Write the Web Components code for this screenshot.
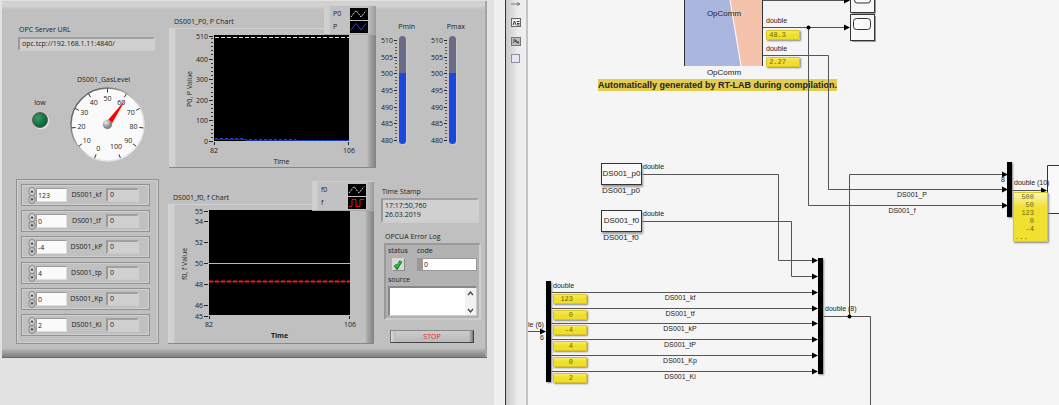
<!DOCTYPE html>
<html lang="en">
<head>
<meta charset="utf-8">
<title>OPC UA monitor and RT-LAB model</title>
<style>
  body { margin: 0; background: #e2e2e2; font-family: "Open Sans", "Noto Sans", sans-serif; font-size: 7px; line-height: 10px; color: #1c1c1c; }
</style>
</head>
<body>
<main-workspace></main-workspace>

<script>
const define = (name, html, setup) => {
  customElements.define(name, class extends HTMLElement {
    connectedCallback() {
      if (this.shadowRoot) return;
      const root = this.attachShadow({ mode: "open" });
      const t = document.createElement("template");
      t.innerHTML = typeof html === "function" ? html(this) : html;
      root.append(t.content.cloneNode(true));
      if (setup) setup(this, root);
    }
  });
};

/* Sunken text indicator */
define("lv-field", `
<style>
  :host { display: block; box-sizing: border-box; background: #d0d0d0; border: 2px solid; border-color: #a0a0a0 #d0d0d0 #cdcdcd #999; padding: 0 2px; }
  output { display: block; white-space: pre-line; }
</style><output><slot></slot></output>`);

/* Numeric control with its read-back value */
define("param-row", el => `
<style>
  :host { display: flex; align-items: center; box-sizing: border-box; height: 22px; padding: 0 10px 0 6px; border: 1px solid #929292; outline: 1px solid #d0d0d0; outline-offset: -2px; }
  svg { flex: none; width: 8px; height: 17px; }
  input { box-sizing: border-box; width: 31px; height: 14px; margin: 0; padding: 0 1px; border: 1px solid; border-color: #999 #ddd #ddd #999; border-radius: 0; background: #fafafa; font: inherit; color: inherit; }
  label { flex: 1; text-align: center; }
  lv-field { width: 33px; height: 14px; }
</style>
<svg viewBox="0 0 8 17" aria-hidden="true"><rect x="1" y="0.5" width="6" height="8" rx="3" fill="#d5d5d5" stroke="#858585"/><rect x="1" y="8.5" width="6" height="8" rx="3" fill="#c5c5c5" stroke="#858585"/><path d="M2.5 5.5L4 3l1.5 2.500zM2.500 11.500h3L4 14z" fill="#333"/></svg>
<input id="v" value="${el.getAttribute("value")}">
<label for="v">${el.getAttribute("label")}</label>
<lv-field>0</lv-field>`);

/* Round gas level dial */
define("gas-gauge", () => {
  let s = "";
  for (let v = 0; v <= 100; v += 10) {
    const ang = (111 + v * 3.18) * Math.PI / 180;
    const c = Math.cos(ang), n = Math.sin(ang);
    s += `<path d="M${37.5 + c * 32} ${37.5 + n * 32}L${37.5 + c * 36} ${37.5 + n * 36}" stroke="#333"/>`;
    const r = v === 100 ? 24 : 26;
    s += `<text x="${37.5 + c * r}" y="${40 + n * r}">${v}</text>`;
  }
  return `
<style>
  :host { display: block; }
  svg { display: block; width: 76px; height: 76px; overflow: visible; }
  text { font-size: 7px; text-anchor: middle; fill: #1c1c1c; }
</style>
<svg viewBox="0 0 76 76" role="img" aria-label="Gas level">
  <defs><linearGradient id="r" x1="0" y1="0" x2="1" y2="1"><stop offset=".2" stop-color="#666"/><stop offset=".6" stop-color="#ddd"/><stop offset="1" stop-color="#eee"/></linearGradient>
  <radialGradient id="k" cx=".35" cy=".3"><stop offset="0" stop-color="#eee"/><stop offset="1" stop-color="#888"/></radialGradient></defs>
  <circle cx="37.500" cy="37.500" r="36.500" fill="#fafafa" stroke="url(#r)" stroke-width="1.500"/>
  ${s}
  <path d="M35.500 36L55.500 12.500L40.500 39z" fill="#f00"/>
  <circle cx="37.500" cy="37.500" r="4.700" fill="url(#k)"/>
</svg>`;
});

define("status-led", `
<style>
  :host { display: flex; flex-direction: column; align-items: center; gap: 4px; }
  span { width: 14px; height: 14px; border-radius: 50%; border: 1px solid #585858; background: radial-gradient(circle at 35% 35%, #3b9a62, #0c6e38 60%, #07522a); box-shadow: 1px 1px 1px #eee; }
</style><slot></slot><span></span>`);

/* Strip chart: frame, plot, axes and legend */
const charts = {
  p: {
    title: "DS001_P0, P Chart", ylabel: "P0, P Value", x: 45, y: 7, w: 135, h: 106, frame: 207, legend: 52,
    y0: 112, scale: 0.206, min: 0, ticks: [510, 400, 300, 200, 100, 0], minor: 20, names: ["P0", "P"],
    lines: `<path d="M46 8.500H180" stroke="#ddd" stroke-dasharray="4 2"/><path d="M46 110.500H77M77 111.500H180" stroke="#1633a0"/><path d="M46 109.500H75M75 110.500H127M127 111.500H180" stroke="#1c3fd0" stroke-dasharray="3 2"/>`,
    icon: `<path d="M1 9L6 2.500L11 9L16 2.500" stroke="#1f45e0" fill="none"/>`
  },
  f: {
    title: "DS001_f0, f Chart", ylabel: "f0, f Value", x: 41, y: 6, w: 141, h: 105, frame: 206, legend: 62, bold: true,
    y0: 110.500, scale: 10.45, min: 45, ticks: [55, 54, 52, 50, 48, 46, 45], names: ["f0", "f"],
    lines: `<path d="M41 58.500H182" stroke="#bbb"/><path d="M41 76.500H182" stroke="#b00"/><path d="M41 76.500H182" stroke="#f01818" stroke-width="2" stroke-dasharray="4 2"/>`,
    icon: `<path d="M1 9.500H4V2.500H8V9.500H12V2.500H16" stroke="#f01010" fill="none"/>`
  }
};
define("lv-chart", el => {
  const c = charts[el.getAttribute("kind")];
  const py = v => c.y0 - (v - c.min) * c.scale;
  let axis = c.ticks.map(v => `<text class="y" x="${c.x - 6}" y="${py(v) + 3}">${v}</text><path d="M${c.x - 5} ${Math.round(py(v)) + .5}h4" stroke="#222"/>`).join("");
  if (c.minor) for (let v = 0; v < 510; v += c.minor) axis += `<path d="M${c.x - 3} ${Math.round(py(v)) + .5}h2" stroke="#333"/>`;
  return `
<style>
  :host { display: block; position: relative; padding-top: 24px; width: ${c.frame}px; }
  h2 { position: absolute; left: 5px; top: 12px; margin: 0; font: inherit; }
  .frame { display: block; width: 100%; height: 138px; background: linear-gradient(90deg, #d3d3d3 0, #d0d0d0 6px, #c0c0c0 7px, #c0c0c0 calc(100% - 9px), #aaa calc(100% - 7px), #868686 calc(100% - 1px)); box-shadow: 0 -1px 0 #d2d2d2, 0 1px 0 #888; }
  .legend { position: absolute; top: 0; right: 0; display: grid; box-sizing: border-box; width: ${c.legend}px; height: 30px; grid-template-columns: 1fr 18px; align-items: center; padding: 1px 8px 1px 9px; background: linear-gradient(90deg, #d0d0d0 0, #d0d0d0 5px, #c2c2c2 6px, #c2c2c2 calc(100% - 8px), #999); border-bottom: 1px solid #aaa; border-top: 1px solid #cfcfcf; }
  .legend svg { width: 18px; height: 12px; background: #000; }
  text { font-size: 7px; text-anchor: middle; fill: #1c1c1c; } .y { text-anchor: end; }
  .b { ${c.bold ? "font-weight: 700" : ""} }
</style>
<h2>${c.title}</h2>
<svg class="frame" role="img" aria-label="${c.title}">
  <rect x="${c.x}" y="${c.y - 1}" width="${c.w}" height="${c.h}" fill="#000"/>
  ${c.lines}${axis}
  <path d="M${c.x + .5} ${c.y + c.h}v3M${c.x + c.w - .5} ${c.y + c.h}v3" stroke="#222"/>
  <text x="${c.x}" y="${c.y + c.h + 11}">82</text><text x="${c.x + c.w}" y="${c.y + c.h + 11}">106</text>
  <text class="b" x="${c.x + c.w / 2}" y="${c.y + c.h + 22}">Time</text>
  <text transform="translate(${c.x - 22} ${c.y + 53}) rotate(-90)">${c.ylabel}</text>
</svg>
<div class="legend">
  <span>${c.names[0]}</span><svg viewBox="0 0 18 12"><path d="M1 9L6 2.500L11 9L16 2.500" stroke="#ddd" fill="none" stroke-dasharray="2 1"/></svg>
  <span>${c.names[1]}</span><svg viewBox="0 0 18 12">${c.icon}</svg>
</div>`;
});

/* Vertical pressure slider, 480 to 510 */
define("pressure-slider", el => {
  let s = "";
  for (let i = 0; i <= 30; i++) {
    const y = Math.round(104 - i * 3.33) + .5, big = i % 5 === 0;
    s += `<path d="M${big ? 13 : 14} ${y}h${big ? 3 : 2}" stroke="${big ? "#222" : "#555"}"/>`;
    if (big) s += `<text x="12" y="${y + 2.5}">${480 + i}</text>`;
  }
  return `
<style>
  :host { display: grid; grid-template-columns: 18px 7px; justify-content: start; row-gap: 4px; }
  label { grid-column: 1 / 3; text-align: right; white-space: nowrap; margin-right: -9px; }
  svg { width: 18px; height: 108px; overflow: visible; }
  text { font-size: 7px; text-anchor: end; fill: #1c1c1c; }
  input { appearance: none; writing-mode: vertical-lr; direction: rtl; width: 7px; height: 108px; margin: 0; border-radius: 4px; background: linear-gradient(to top, #1c46e0 0, #1c46e0 66%, #6b6b88 66%); box-shadow: 1px 1px 0 #ccc; }
  input::-webkit-slider-thumb { appearance: none; width: 7px; height: 2px; background: transparent; }
</style>
<label for="r">${el.getAttribute("label")}</label>
<svg aria-hidden="true">${s}</svg>
<input id="r" type="range" min="480" max="510" value="500">`;
});

define("error-log", `
<style>
  :host { display: block; box-sizing: border-box; border: 2px solid; border-color: #999 #d0d0d0 #ccc #999; background: #b2b2b2; padding: 1px 2px 2px; }
  .top { display: grid; grid-template-columns: 29px minmax(0, 1fr); row-gap: 2px; }
  .tick { display: block; width: 12px; height: 12px; margin-left: 4px; background: #d8d8d8; box-shadow: 1px 1px 0 #888; }
  .code { display: flex; height: 13px; box-sizing: border-box; border: 1px solid #999; }
  .code i { flex: none; width: 5px; background: #999; }
  input, textarea { font: inherit; color: inherit; border: 0; padding: 0 1px; margin: 0; background: #fff; min-width: 0; flex: 1; resize: none; border-radius: 0; overflow: hidden; }
  .source { display: block; margin: 4px 0 1px; }
  .box { display: flex; height: 30px; box-sizing: border-box; border: 2px solid; border-width: 2px 1px 1px 2px; border-color: #888 #ccc #ccc #888; background: #fff; }
  .box svg { flex: none; width: 11px; height: 27px; background: #f2f2f2; }
</style>
<div class="top">
  <span>status</span><label for="c">code</label>
  <svg class="tick" viewBox="0 0 12 12" role="img" aria-label="OK"><path d="M3 7L5 9.500L9 3" fill="none" stroke="#064d12" stroke-width="3"/><path d="M3 7L5 9L9 3" fill="none" stroke="#16d52c" stroke-width="1.800"/></svg>
  <div class="code"><i></i><input id="c" value="0"></div>
</div>
<label class="source" for="s">source</label>
<div class="box"><textarea id="s"></textarea><svg viewBox="0 0 11 27" aria-hidden="true"><path d="M3 7L5.500 4L8 7M3 21L5.500 24L8 21" fill="none" stroke="#444" stroke-width="1.300"/></svg></div>`);

define("front-panel", `
<style>
  :host { display: grid; grid-template-columns: 153px 208px minmax(0, 1fr); box-sizing: border-box; padding: 4px 4px 13px 14px;
    background: linear-gradient(#cfcfcf 0, #d4d4d4 4px, #c0c0c0 9px, transparent 9px), linear-gradient(transparent calc(100% - 9px), #a8a8a8 calc(100% - 6px), #858585 calc(100% - 1px)), #c0c0c0;
    border-right: 2px solid #a5a5a5; box-shadow: 0 1px 0 #666; }
  .left { padding: 20px 10px 0 0; }
  .left > label { display: block; padding-left: 3px; margin-bottom: 2px; }
  .left > lv-field { margin: 0 4px 0 2px; height: 14px; }
  .dial { display: grid; grid-template-columns: 44px 76px; column-gap: 8px; padding: 24px 0 0 2px; }
  .dial h2 { grid-column: 2; margin: 0 0 2px; padding-left: 7px; font: inherit; }
  status-led { margin-top: 11px; }
  .params { display: grid; gap: 4px; margin: 16px 0 0; padding: 4px 8px 7px 4px; border: 1px solid #929292; outline: 1px solid #d0d0d0; outline-offset: -2px; }
  .charts { display: grid; gap: 14px; align-content: start; }
  .charts lv-chart + lv-chart { margin-left: -1px; }
  .right { padding: 17px 0 0 4px; }
  .sliders { display: grid; grid-template-columns: 50px 50px; }
  .stamp { margin: 43px 2px 0 0; }
  .stamp h3 { padding-left: 1px; }
  .stamp lv-field { height: 25px; margin-top: 1px; line-height: 9px; padding-top: 1px; }
  h3 { font: inherit; margin: 0; }
  .err { margin: 9px 0 0 3px; }
  .err h3 { margin-bottom: 1px; padding-left: 1px; }
  button { display: block; box-sizing: border-box; width: 84px; height: 13px; margin: 10px 0 0 9px; padding: 0; font: inherit; color: #e81c1c; border: 1px solid; border-color: #888 #444 #444 #777; border-radius: 0; background: linear-gradient(90deg, #ddd 0, #bbb 4px, transparent 5px, transparent calc(100% - 4px), #777), linear-gradient(#ccc, #bababa); }
</style>
<section class="left">
  <label>OPC Server URL</label>
  <lv-field>opc.tcp://192.168.1.11:4840/</lv-field>
  <div class="dial"><h2>DS001_GasLevel</h2><status-led>low</status-led><gas-gauge></gas-gauge></div>
  <div class="params">
    <param-row value="123" label="DS001_kf"></param-row>
    <param-row value="0" label="DS001_tf"></param-row>
    <param-row value="-4" label="DS001_kP"></param-row>
    <param-row value="4" label="DS001_tp"></param-row>
    <param-row value="0" label="DS001_Kp"></param-row>
    <param-row value="2" label="DS001_Ki"></param-row>
  </div>
</section>
<section class="charts"><lv-chart kind="p"></lv-chart><lv-chart kind="f"></lv-chart></section>
<section class="right">
  <div class="sliders"><pressure-slider label="Pmin"></pressure-slider><pressure-slider label="Pmax"></pressure-slider></div>
  <div class="stamp"><h3>Time Stamp</h3><lv-field>17:17:50,760
26.03.2019</lv-field></div>
  <div class="err"><h3>OPCUA Error Log</h3><error-log></error-log></div>
  <button type="button">STOP</button>
</section>`);

define("tool-strip", `
<style>
  :host { display: flex; flex-direction: column; align-items: center; gap: 8px; box-sizing: border-box; width: 23px; border-left: 1px solid #1d3a50; border-right: 2px solid #c3c3c9; background: linear-gradient(90deg, #c9c9c9, #ececec 12px, #efefef); }
  button { width: 10px; height: 10px; padding: 0; border: 0; background: none; }
  button:first-child { height: 5px; }
  svg { display: block; width: 10px; height: 100%; }
</style>
<button aria-label="Zoom"><svg viewBox="0 0 10 5"><path d="M0 1.500H9M6 0L9 1.500L6 3" stroke="#777" fill="none"/></svg></button>
<button aria-label="Annotation"><svg viewBox="0 0 10 10"><rect x=".5" y=".5" width="9" height="8" fill="#eee" stroke="#666"/><path d="M2 7L3.500 3L5 7M6 3.500h2.500M6 5.500h2.500M6 7h2.500" stroke="#333" fill="none"/></svg></button>
<button aria-label="Image"><svg viewBox="0 0 10 10"><rect x=".5" y="1.500" width="9" height="8" fill="#bbb" stroke="#777"/><path d="M2 4h3v2h3M2 7l2-2 4 2.500" stroke="#444" fill="none"/></svg></button>
<button aria-label="Area"><svg viewBox="0 0 10 10"><rect x=".5" y=".5" width="8" height="8" fill="#e6e6f6" stroke="#8e8ea0"/></svg></button>`);

/* Port value shown on the wire */
define("value-display", `
<style>
  :host { display: block; box-sizing: border-box; width: 34px; height: 10px; border: 1px solid #d8c628; border-radius: 1px; background: linear-gradient(#f7ea60, #efdf28 50%); box-shadow: 1px 1px 2px #888; padding-right: 13px; text-align: right; font: 7px/9px "Liberation Mono", monospace; color: #6e6712; }
  div { white-space: pre-line; }
  ::slotted(b) { display: block; font-weight: 400; text-align: left; padding-left: 1px; }
</style><div><slot></slot></div>`);

/* Block diagram: nodes are placed freely on the sheet */
define("block-diagram", () => {
  const wire = d => `<path d="${d}"/>`;
  const arrow = (x, y) => `<path class="a" d="M${x} ${y - 3}l6 3l-6 3z"/>`;
  const rows = ["kf", "tf", "kP", "tP", "Kp", "Ki"], vals = ["123", "0", "-4", "4", "0", "2"];
  const ys = [292, 308, 323, 339, 355, 371];
  let w = "", n = "";
  ys.forEach((y, i) => {
    w += wire(`M23 ${y}.5H286`) + arrow(284, y + .5);
    n += `<value-display style="left:25px;top:${y + 2}px">${vals[i]}</value-display><span class="c" style="left:152px;top:${y + 1}px">DS001_${rows[i]}</span>`;
  });
  const label = (x, y, t, c = "") => `<span class="${c}" style="left:${x}px;top:${y - 5}px">${t}</span>`;
  return `
<style>
  :host { display: block; position: relative; overflow: hidden; background: #f5f5f5; font: 7px/10px "Liberation Sans", Arial, sans-serif; color: #222; }
  .wires { position: absolute; inset: 0; width: 100%; height: 100%; fill: none; stroke: #555; }
  .a { fill: #000; stroke: none; }
  span, .block, .mux, .note, value-display { position: absolute; white-space: nowrap; }
  .big { font-size: 8px; }
  .c { transform: translateX(-50%); }
  .block { box-sizing: border-box; width: 41px; height: 22px; border: 1px solid #333; background: #f9f9f9; box-shadow: 1px 2px 2px #999; font-size: 8px; line-height: 20px; display: flex; justify-content: center; }
  .mux { width: 5px; background: #000; box-shadow: 1px 1px 2px #888; }
  .note { left: 70px; top: 79px; height: 12px; background: #e2cd50; font-size: 9px; font-weight: 700; line-height: 12px; color: #222; }
  .vec { width: 35px; height: 50px; line-height: 8px; background: linear-gradient(#fbf6b8, #f0e030 30%); }
</style>
<div class="note">Automatically generated by RT-LAB during compilation.</div>
<svg class="wires" aria-hidden="true">
  <path d="M156 0H202L213 66H156z" fill="#abb6de" stroke="none"/><path d="M202 0H235V66H213z" fill="#f5c3ac" stroke="none"/>
  <path d="M202 0L213 66" stroke="#fff"/><path d="M156.500 0V66M234.500 0V66" stroke="#333"/>
  <g fill="#f8f8f8" stroke="#333"><path d="M322.500 0V12.500H346.500V0M326.500 0Q326.500 3 329 3H340Q342.500 3 342.500 0"/><rect x="322.500" y="14.500" width="24" height="26"/><rect x="325.500" y="18.500" width="17" height="11" rx="3"/></g>
  <path d="M324 41.500H347.500V16M324 13.500H347.500V0" stroke="#999"/>
  ${wire("M235 .5H318")}${arrow(316, .5)}
  ${wire("M235 27.500H318")}${arrow(316, 27.5)}${wire("M280.500 27V205.500H477")}${arrow(474, 205.5)}
  ${wire("M235 55.500H300.500V189.500H477")}${arrow(474, 189.5)}
  ${wire("M113 174.500H250.500V260.500H286")}${arrow(284, 260.5)}
  ${wire("M113 221.500H263.500V276.500H286")}${arrow(284, 276.5)}
  ${w}
  ${wire("M0 331.500H14")}${arrow(12, 331.5)}
  ${wire("M295 316.500H342.500V2000")}${wire("M321.500 316V174.500H477")}${arrow(474, 174.5)}
  ${wire("M484 190.500H514")}${arrow(513, 190.5)}
  <path d="M531 165.500H519.500V213.500H531" fill="#f9f9f9" stroke="#333"/>
  <circle cx="280.500" cy="27.500" r="2" class="a"/><circle cx="321.500" cy="316.500" r="2" class="a"/>
</svg>
${label(196, 14, "OpComm", "big c")}${label(196, 73, "OpComm", "big c")}
${label(238, 21, "double")}${label(238, 49, "double")}
<value-display style="left:238px;top:30px">48.3</value-display><value-display style="left:238px;top:57px">2.27</value-display>
<div class="block" style="left:73px;top:163px">DS001_p0</div><div class="block" style="left:73px;top:210px">DS001_f0</div>
${label(93, 191, "DS001_p0", "big c")}${label(93, 238, "DS001_f0", "big c")}
${label(115, 167, "double")}${label(115, 214, "double")}
<div class="mux" style="left:18px;top:281px;height:101px"></div>
<div class="mux" style="left:290px;top:258px;height:116px"></div>
<div class="mux" style="left:479px;top:162px;height:55px"></div>
${label(25, 286, "double")}${label(0, 325, "le (6)")}${label(12, 338, "6")}
${label(297, 309, "double (8)")}${label(473, 180, "8")}${label(486, 183, "double (10)")}
${label(384, 195, "DS001_P", "c")}${label(374, 211, "DS001_f", "c")}
<value-display class="vec" style="left:485px;top:192px"><span style="position:static;white-space:inherit">500
50
123
0
-4</span><b>...</b></value-display>
${n}`;
});

define("main-workspace", `
<style>
  :host { display: flex; min-height: 100vh; }
  .app { flex: 0 0 494px; box-sizing: border-box; padding: 1px 7px 0 2px; background: #e2e2e2; }
  .edge { flex: 0 0 11px; background: #f0f0f0; }
  tool-strip { flex: none; }
  block-diagram { flex: 1; }
</style>
<div class="app"><front-panel></front-panel></div>
<div class="edge"></div>
<tool-strip></tool-strip>
<block-diagram></block-diagram>`);
</script>
</body>
</html>
